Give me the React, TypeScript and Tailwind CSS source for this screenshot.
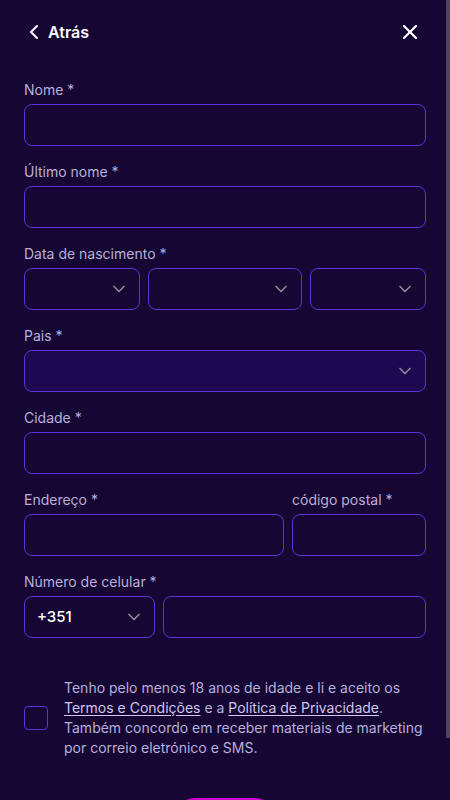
import { ChevronDown, ChevronLeft } from 'lucide-react'

const Label = ({ text }: { text: string }) => (
  <label className="block h-5 text-sm leading-5 text-[#b8b0d8]">{text}</label>
)

const TextInput = () => (
  <input
    type="text"
    className="mt-1 block h-[42px] w-full rounded-lg border border-[#5b32d6] bg-transparent px-3 text-[15px] text-white outline-none"
  />
)

const SelectBox = ({ value, filled }: { value?: string; filled?: boolean }) => (
  <div
    className={`relative mt-1 flex h-[42px] w-full items-center rounded-lg border border-[#5b32d6] px-3 ${
      filled ? 'bg-[#1d0950]' : 'bg-transparent'
    }`}
  >
    <span className="text-[15px] font-medium text-white">{value}</span>
    <ChevronDown size={20} strokeWidth={2} className="absolute right-[10px] top-1/2 -translate-y-1/2 text-[#8c8699]" />
  </div>
)

export default function App() {
  return (
    <div className="flex h-[800px] overflow-hidden bg-[#150633] font-['Inter',sans-serif]">
      <div className="w-[446px] shrink-0">
        <header className="flex h-16 items-center justify-between pl-[22px] pr-[29px]">
          <button className="flex items-center gap-0.5 text-white">
            <ChevronLeft size={24} strokeWidth={2} />
            <span className="text-base font-semibold">Atrás</span>
          </button>
          <button className="text-white">
            <svg width="14" height="14" viewBox="0 0 14 14" fill="none" stroke="currentColor" strokeWidth="2.2" strokeLinecap="round">
              <line x1="1" y1="1" x2="13" y2="13" />
              <line x1="13" y1="1" x2="1" y2="13" />
            </svg>
          </button>
        </header>

        <form className="pl-6 pr-5 pt-4 pb-6">
          <div className="mb-4">
            <Label text="Nome *" />
            <TextInput />
          </div>

          <div className="mb-4">
            <Label text="Último nome *" />
            <TextInput />
          </div>

          <div className="mb-4">
            <Label text="Data de nascimento *" />
            <div className="grid grid-cols-[116fr_154fr_116fr] gap-2">
              <SelectBox />
              <SelectBox />
              <SelectBox />
            </div>
          </div>

          <div className="mb-4">
            <Label text="Pais *" />
            <SelectBox filled />
          </div>

          <div className="mb-4">
            <Label text="Cidade *" />
            <TextInput />
          </div>

          <div className="mb-4 grid grid-cols-[260fr_134fr] gap-2">
            <div>
              <Label text="Endereço *" />
              <TextInput />
            </div>
            <div>
              <Label text="código postal *" />
              <TextInput />
            </div>
          </div>

          <div>
            <Label text="Número de celular *" />
            <div className="grid grid-cols-[131fr_263fr] gap-2">
              <SelectBox value="+351" />
              <TextInput />
            </div>
          </div>

          <div className="mt-10 flex items-center gap-4">
            <div className="h-6 w-6 shrink-0 rounded border border-[#5b32d6]" />
            <p className="text-sm leading-5 text-[#b8b0d8]">
              Tenho pelo menos 18 anos de idade e li e aceito os{' '}
              <a className="text-[#cfc7ee] underline underline-offset-2">Termos e Condições</a> e a{' '}
              <a className="text-[#cfc7ee] underline underline-offset-2">Política de Privacidade</a>. Também concordo em
              receber materiais de marketing por correio eletrónico e SMS.
            </p>
          </div>

          <div className="mt-10 flex justify-center">
            <button type="button" className="h-11 w-[104px] rounded-full bg-[#d000d0] text-sm font-semibold text-white">
              Próximo
            </button>
          </div>
        </form>
      </div>

      <div className="w-1 shrink-0">
        <div className="h-[738px] w-1 bg-[#4b4560]" />
      </div>
    </div>
  )
}
